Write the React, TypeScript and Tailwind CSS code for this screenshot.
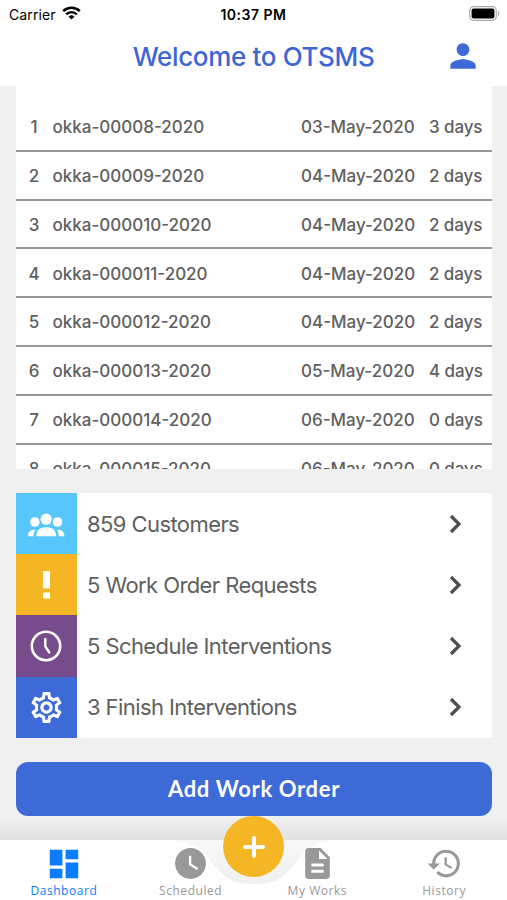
import React from 'react';
import { MdPerson, MdDashboard, MdWatchLater, MdDescription, MdHistory, MdOutlineSettings } from 'react-icons/md';

const orders = [
  { id: 1, code: 'okka-00008-2020', date: '03-May-2020', days: '3 days' },
  { id: 2, code: 'okka-00009-2020', date: '04-May-2020', days: '2 days' },
  { id: 3, code: 'okka-000010-2020', date: '04-May-2020', days: '2 days' },
  { id: 4, code: 'okka-000011-2020', date: '04-May-2020', days: '2 days' },
  { id: 5, code: 'okka-000012-2020', date: '04-May-2020', days: '2 days' },
  { id: 6, code: 'okka-000013-2020', date: '05-May-2020', days: '4 days' },
  { id: 7, code: 'okka-000014-2020', date: '06-May-2020', days: '0 days' },
  { id: 8, code: 'okka-000015-2020', date: '06-May-2020', days: '0 days' },
];

const PeopleIcon = () => (
  <svg width="61" height="61" viewBox="0 0 61 61" fill="#fff">
    <circle cx="18.9" cy="29" r="4.8" />
    <circle cx="41.5" cy="29" r="4.8" />
    <circle cx="30.2" cy="26.4" r="6.8" className="fill-[#57c6fb]" />
    <circle cx="30.2" cy="26.2" r="5.6" />
    <path d="M20.2 43.2c0-5.8 3.700-9 10-9s10 3.200 10 9z" />
    <path d="M12 43.200c0-3.600 2-6.200 5.800-6.400.6 0 1 .1 1.500.2-1.200 1.700-1.700 3.600-1.700 6.200z" />
    <path d="M48.400 43.200c0-3.600-2-6.200-5.800-6.400-.6 0-1 .1-1.500.2 1.200 1.700 1.700 3.600 1.700 6.200z" />
  </svg>
);

const ExclamationIcon = () => (
  <svg width="10" height="30" viewBox="0 0 10 30" fill="#fff">
    <path d="M1 1h7v17.5H1zM1 22.5h7v6H1z" />
  </svg>
);

const ClockIcon = () => (
  <svg className="mr-px" width="32" height="32" viewBox="0 0 32 32" fill="none" stroke="#fff" strokeLinecap="round">
    <circle cx="16" cy="16" r="14.2" strokeWidth="2.6" />
    <path d="M15.300 9v7.500l4 6" strokeWidth="2.4" />
  </svg>
);

const stats = [
  { label: '859 Customers', color: 'bg-[#57c6fb]', icon: <PeopleIcon /> },
  { label: '5 Work Order Requests', color: 'bg-[#f5b625]', icon: <ExclamationIcon /> },
  { label: '5 Schedule Interventions', color: 'bg-[#784b8c]', icon: <ClockIcon /> },
  { label: '3 Finish Interventions', color: 'bg-[#3e6ad8]', icon: <MdOutlineSettings size={37} color="#fff" className="mr-px" /> },
];

const StatusBar = () => (
  <div className="grid h-7 grid-cols-3 items-center pl-[9px] pr-[7px] text-[14px] text-black">
    <div className="flex items-center gap-1.5">
      <span className="tracking-[0.1px]">Carrier</span>
      <svg className="-mt-0.5" width="19" height="14" viewBox="0 0 19 14" fill="none" stroke="#000" strokeWidth="2.4">
        <path d="M1.2 5.2a11.8 11.8 0 0 1 16.6 0" />
        <path d="M4.2 8.3a7.5 7.5 0 0 1 10.6 0" />
        <path d="M9.5 13.6 6.6 10.7a4.1 4.1 0 0 1 5.8 0z" fill="#000" stroke="none" />
      </svg>
    </div>
    <span className="-ml-0.5 text-center font-semibold tracking-[0.5px]">10:37 PM</span>
    <svg className="-mt-0.5 justify-self-end" width="31" height="15" viewBox="0 0 31 15">
      <rect x="0.7" y="0.7" width="26.6" height="13.6" rx="4" fill="none" stroke="#aaa" strokeWidth="1.2" />
      <rect x="2.6" y="2.6" width="22.8" height="9.8" rx="2" fill="#000" />
      <path d="M29 5v5c1.6-.7 1.6-4.3 0-5z" fill="#999" />
    </svg>
  </div>
);

const TabBar = () => {
  const tabs = [
    { label: 'Dashboard', icon: <MdDashboard size={38} />, color: 'text-[#0a7cff]' },
    { label: 'Scheduled', icon: <MdWatchLater size={37} />, color: 'text-[#999999]' },
    { label: 'My Works', icon: <MdDescription size={37} />, color: 'text-[#999999]' },
    { label: 'History', icon: <MdHistory size={37} />, color: 'text-[#999999]' },
  ];

  return (
    <nav className="relative mt-auto h-[60px]">
      {/* Bar background with the notch under the add button */}
      <svg className="absolute -top-6 left-0" width="507" height="84" viewBox="0 0 507 84">
        <defs>
          <linearGradient id="shade" x1="0" y1="0" x2="0" y2="1">
            <stop offset="0" stopColor="#000" stopOpacity="0" />
            <stop offset="1" stopColor="#000" stopOpacity="0.06" />
          </linearGradient>
          <linearGradient id="notch" x1="0" y1="0" x2="0" y2="1">
            <stop offset="0" stopColor="#f8f8f8" />
            <stop offset="1" stopColor="#f0f0f0" />
          </linearGradient>
        </defs>
        <rect width="507" height="24" fill="url(#shade)" />
        <rect y="24" width="507" height="60" fill="#fff" />
        <path d="M168 24c28 0 36 13 47 26 11 13 20 18 39 18s28-5 39-18c11-13 19-26 47-26z" fill="url(#notch)" />
      </svg>
      <div className="relative grid h-full grid-cols-4">
        {tabs.map(tab => (
          <div key={tab.label} className={`flex flex-col items-center pl-px ${tab.color}`}>
            <div className="flex h-[43px] items-center pt-1">{tab.icon}</div>
            <span className="font-['Open_Sans',sans-serif] text-[12px] font-medium leading-4 tracking-[0.55px]">{tab.label}</span>
          </div>
        ))}
      </div>
      <button className="absolute -top-6 left-[223px] flex size-[61px] items-center justify-center rounded-full bg-[#f5b625]">
        <svg width="24" height="24" viewBox="0 0 24 24" stroke="#fff" strokeWidth="4" strokeLinecap="round">
          <path d="M12 3v18M3 12h18" />
        </svg>
      </button>
    </nav>
  );
};

export default function App() {
  return (
    <div className="flex h-[900px] w-[507px] flex-col overflow-hidden bg-[#f0f0f0] font-[Inter,sans-serif]">
      <header className="h-[86px] shrink-0 bg-white">
        <StatusBar />
        <div className="grid h-14 grid-cols-[1fr_auto_1fr] items-center">
          <h1 className="col-start-2 text-[26px] font-medium tracking-[-0.35px] text-[#3e66d3]">Welcome to OTSMS</h1>
          <MdPerson size={38} className="mr-[25px] justify-self-end text-[#3e6ad8]" />
        </div>
      </header>

      {/* Pending work orders */}
      <section className="mx-4 h-[383px] w-[476px] shrink-0 overflow-hidden bg-white pt-[17px]">
        {orders.map(o => (
          <div key={o.id} className="flex h-[48.8px] items-center whitespace-nowrap border-b-2 border-[#969696] pl-[9px] pr-[10px] pt-[3px] text-[17px] font-medium text-[#606060]">
            <span className="w-[18px] text-center">{o.id}</span>
            <span className="ml-[9.5px] flex-1">{o.code}</span>
            <span className="w-[114px]">{o.date}</span>
            <span className="ml-[14px] w-[53px] text-right tracking-[-0.1px]">{o.days}</span>
          </div>
        ))}
      </section>

      {/* Summary */}
      <section className="mx-4 mt-6 w-[476px] shrink-0 bg-white">
        {stats.map(s => (
          <div key={s.label} className="flex h-[61.2px] items-center">
            <div className={`flex h-full w-[61px] items-center justify-center ${s.color}`}>{s.icon}</div>
            <span className="ml-[10px] flex-1 pt-px text-[22px] tracking-[-0.58px] text-[#606060]">{s.label}</span>
            <svg className="mr-[30px]" width="13" height="20" viewBox="0 0 13 20" fill="none" stroke="#4d4d4d" strokeWidth="3.2">
              <path d="M2 2l8 8-8 8" />
            </svg>
          </div>
        ))}
      </section>

      <button className="mx-4 mt-6 h-[54px] w-[476px] shrink-0 rounded-xl bg-[#3e6ad8] font-[Lato,sans-serif] text-[22px] font-bold tracking-[0.65px] text-white">
        Add Work Order
      </button>

      <TabBar />
    </div>
  );
}
